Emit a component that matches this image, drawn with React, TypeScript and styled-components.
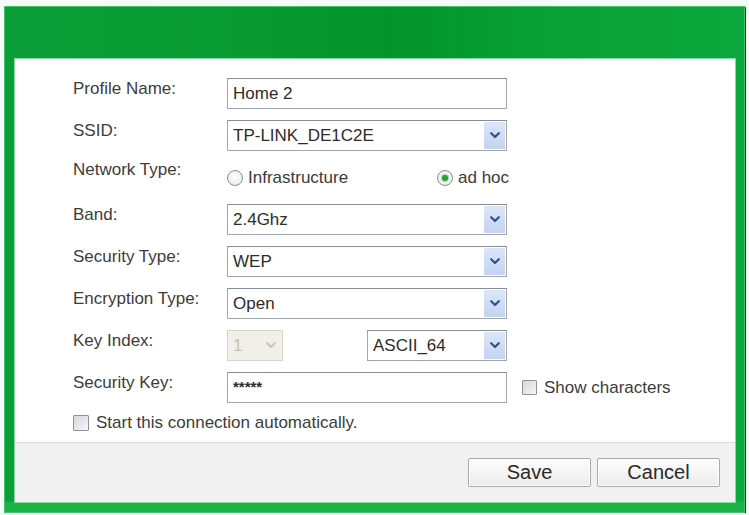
import styled, { createGlobalStyle } from "styled-components"

const GlobalStyle = createGlobalStyle`
    html, body {
        margin: 0;
        padding: 0;
        background: #f6faf8;
    }
    body {
        font-family: "Liberation Sans", Arial, sans-serif;
    }
`

const Window = styled.div`
    width: 741px;
    height: 507px;
    margin: 6px 0 0 4px;
    box-sizing: border-box;
    padding: 53px 10px 11px 11px;
    display: flex;
    background:
        linear-gradient(180deg, rgba(0, 0, 0, 0) 0, rgba(0, 0, 0, 0) 494px, #1bb246 497px),
        linear-gradient(90deg, #0b9d37 0%, #089a31 35%, #03942b 52%, #08a035 72%, #0ca83d 100%);
    box-shadow: 1px 1px 0 #163d24, inset 0 0 0 1px #45c46a;
`

const Panel = styled.div`
    flex: 1;
    display: flex;
    flex-direction: column;
    background: #fff;
    box-shadow: 0 0 0 1px #86dba0;
`

const Content = styled.div`
    flex: 1;
    padding: 19px 0 0 58px;
`

const Form = styled.div`
    display: grid;
    grid-template-columns: 154px 280px auto;
    grid-template-rows: repeat(8, 31px) auto;
    row-gap: 11px;
    color: #3a3a3a;
    font-size: 17px;
`

const Label = styled.div<{ $lift?: number }>`
    line-height: 21px;
    color: #3c3c3c;
    margin-top: ${p => -(p.$lift ?? 0)}px;
`

const TextField = styled.div`
    box-sizing: border-box;
    width: 280px;
    height: 31px;
    display: flex;
    align-items: center;
    padding: 0 5px;
    border: 1px solid #a2a7ad;
    border-top-color: #878d94;
    background: #fff;
    color: #2c2c2c;
`

const Masked = styled.span`
    font-weight: bold;
    font-size: 15px;
    letter-spacing: 0;
    align-self: flex-start;
    margin-top: 5px;
`

const SelectBox = styled.div<{ $width: number; $disabled?: boolean }>`
    box-sizing: border-box;
    width: ${p => p.$width}px;
    height: 31px;
    display: flex;
    align-items: stretch;
    border: 1px solid ${p => (p.$disabled ? "#d6d5cc" : "#a2a7ad")};
    border-top-color: ${p => (p.$disabled ? "#d6d5cc" : "#878d94")};
    background: ${p => (p.$disabled ? "#f1f0e8" : "#fff")};
    color: ${p => (p.$disabled ? "#c2c1b8" : "#2c2c2c")};
`

const SelectValue = styled.div`
    flex: 1;
    display: flex;
    align-items: center;
    padding-left: 5px;
`

const ArrowButton = styled.div<{ $disabled?: boolean }>`
    width: 21px;
    margin: 1px;
    display: flex;
    align-items: center;
    justify-content: center;
    background: ${p => (p.$disabled ? "transparent" : "linear-gradient(180deg, #dbe6f9 0%, #c3d3f1 100%)")};
    color: ${p => (p.$disabled ? "#c9c8c0" : "#33528f")};
`

const KeyRow = styled.div`
    display: flex;
    justify-content: space-between;
`

const RadioGroup = styled.div`
    display: flex;
    align-items: center;
`

const RadioOption = styled.div<{ $width?: number }>`
    display: flex;
    align-items: center;
    gap: 5px;
    width: ${p => (p.$width ? `${p.$width}px` : "auto")};
    flex-shrink: 0;
    white-space: nowrap;
`

const RadioCircle = styled.span<{ $checked?: boolean }>`
    box-sizing: border-box;
    flex-shrink: 0;
    width: 16px;
    height: 16px;
    border-radius: 50%;
    border: 1px solid #8b8f93;
    background: radial-gradient(circle at 50% 40%, #ffffff 0%, #e2e4e6 100%);
    display: flex;
    align-items: center;
    justify-content: center;
    &::after {
        content: "";
        display: ${p => (p.$checked ? "block" : "none")};
        width: 6px;
        height: 6px;
        border-radius: 50%;
        background: #2e9c3a;
        box-shadow: 0 0 0 1px #a6dbad;
    }
`

const CheckOption = styled.div<{ $offset?: number }>`
    display: flex;
    align-items: center;
    gap: 7px;
    margin-left: ${p => p.$offset ?? 0}px;
    white-space: nowrap;
    color: #3c3c3c;
`

const CheckBox = styled.span<{ $size: number }>`
    box-sizing: border-box;
    flex-shrink: 0;
    width: ${p => p.$size}px;
    height: ${p => p.$size}px;
    border: 1px solid #8e9297;
    border-radius: 1px;
    background: linear-gradient(135deg, #d3d8de 0%, #f4f5f7 100%);
`

const AutoRow = styled.div`
    grid-column: 1 / -1;
    line-height: 18px;
`

const Footer = styled.div`
    box-sizing: border-box;
    height: 60px;
    display: flex;
    justify-content: flex-end;
    align-items: flex-start;
    gap: 6px;
    padding: 15px 15px 0 0;
    border-top: 1px solid #d9d9d9;
    background: #f1f1f1;
`

const Button = styled.button`
    box-sizing: border-box;
    width: 123px;
    height: 29px;
    padding: 0;
    font-family: "Liberation Sans", Arial, sans-serif;
    font-size: 20px;
    color: #2a2a2a;
    border: 1px solid #aaaaaa;
    border-radius: 2px;
    background: linear-gradient(180deg, #fdfdfd 0%, #ebebeb 100%);
    box-shadow: inset 0 0 0 1px #ffffff;
`

function Chevron() {
    return (
        <svg width="10" height="7" viewBox="0 0 10 7">
            <path d="M1.2 1.2 L5 5 L8.8 1.2" fill="none" stroke="currentColor" strokeWidth="2.2" strokeLinecap="round" strokeLinejoin="round" />
        </svg>
    )
}

function Select({ value, width, disabled }: { value: string; width: number; disabled?: boolean }) {
    return (
        <SelectBox $width={width} $disabled={disabled}>
            <SelectValue>{value}</SelectValue>
            <ArrowButton $disabled={disabled}><Chevron /></ArrowButton>
        </SelectBox>
    )
}

export default function App() {
    return (
        <>
            <GlobalStyle />
            <Window>
                <Panel>
                    <Content>
                        <Form>
                            <Label>Profile Name:</Label>
                            <TextField>Home 2</TextField>
                            <div />

                            <Label>SSID:</Label>
                            <Select value="TP-LINK_DE1C2E" width={280} />
                            <div />

                            <Label $lift={3}>Network Type:</Label>
                            <RadioGroup>
                                <RadioOption $width={210}><RadioCircle />Infrastructure</RadioOption>
                                <RadioOption><RadioCircle $checked />ad hoc</RadioOption>
                            </RadioGroup>
                            <div />

                            <Label>Band:</Label>
                            <Select value="2.4Ghz" width={280} />
                            <div />

                            <Label>Security Type:</Label>
                            <Select value="WEP" width={280} />
                            <div />

                            <Label>Encryption Type:</Label>
                            <Select value="Open" width={280} />
                            <div />

                            <Label>Key Index:</Label>
                            <KeyRow>
                                <Select value="1" width={56} disabled />
                                <Select value="ASCII_64" width={140} />
                            </KeyRow>
                            <div />

                            <Label>Security Key:</Label>
                            <TextField><Masked>*****</Masked></TextField>
                            <CheckOption $offset={15}><CheckBox $size={15} />Show characters</CheckOption>

                            <AutoRow>
                                <CheckOption><CheckBox $size={16} />Start this connection automatically.</CheckOption>
                            </AutoRow>
                        </Form>
                    </Content>
                    <Footer>
                        <Button>Save</Button>
                        <Button>Cancel</Button>
                    </Footer>
                </Panel>
            </Window>
        </>
    )
}
